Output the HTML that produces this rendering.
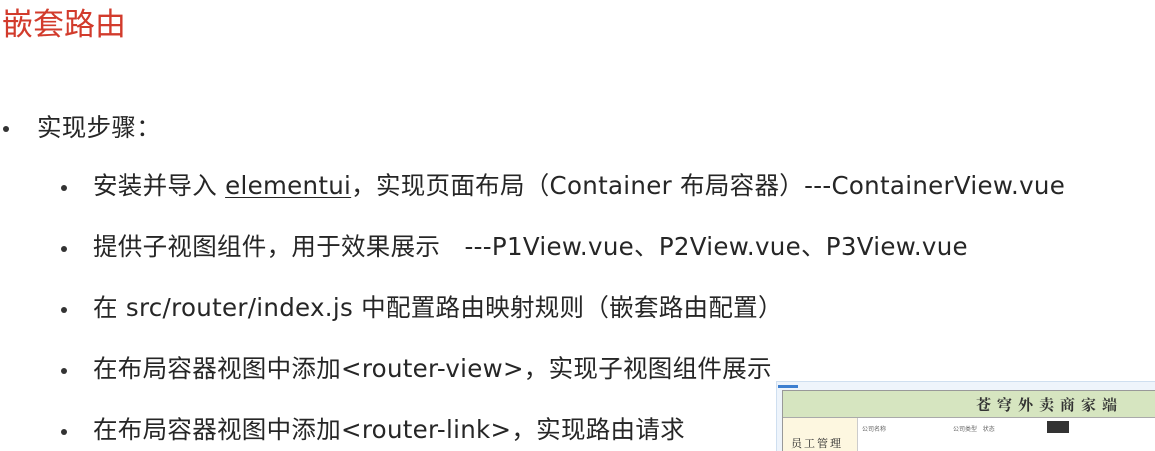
<!DOCTYPE html>
<html><head><meta charset="utf-8"><style>
html,body{margin:0;padding:0;width:1155px;height:451px;overflow:hidden;background:#fff;}
body{position:relative;font-family:"DejaVu Sans","Noto Sans CJK SC",sans-serif;color:#262626;}
.t{position:absolute;left:2px;top:2px;font-size:31px;color:#d23b2c;line-height:40px;font-family:"Noto Sans CJK SC",sans-serif;}
.l{position:absolute;font-size:24.5px;letter-spacing:0.3px;line-height:30px;white-space:nowrap;}
.b{position:absolute;width:6px;height:6px;border-radius:50%;background:#333;}
u{text-decoration-thickness:1px;text-underline-offset:3px;}
</style></head><body>
<div class="t">嵌套路由</div>
<div class="b" style="left:3px;top:126px"></div>
<div class="l" style="left:37px;top:113px">实现步骤：</div>
<div class="b" style="left:61px;top:185px"></div>
<div class="l" style="left:93px;top:171px">安装并导入 <u>elementui</u>，实现页面布局（Container 布局容器）---ContainerView.vue</div>
<div class="b" style="left:61px;top:246px"></div>
<div class="l" style="left:93px;top:232px">提供子视图组件，用于效果展示&nbsp;&nbsp;&nbsp;---P1View.vue、P2View.vue、P3View.vue</div>
<div class="b" style="left:61px;top:307px"></div>
<div class="l" style="left:93px;top:293px">在 src/router/index.js 中配置路由映射规则（嵌套路由配置）</div>
<div class="b" style="left:61px;top:368px"></div>
<div class="l" style="left:93px;top:354px">在布局容器视图中添加&lt;router-view&gt;，实现子视图组件展示</div>
<div class="b" style="left:61px;top:429px"></div>
<div class="l" style="left:93px;top:415px">在布局容器视图中添加&lt;router-link&gt;，实现路由请求</div>
<div style="position:absolute;left:776px;top:381px;width:379px;height:70px;background:#eef4fb;border-top:1px solid #cfdff0;border-left:1px solid #cfdff0;"></div>
<div style="position:absolute;left:778px;top:385px;width:20px;height:3px;background:#3d7fd0;"></div>
<div style="position:absolute;left:782px;top:390px;width:373px;height:61px;background:#fff;border-left:1px solid #999;border-top:1px solid #999;">
<div style="height:26px;background:#d6e5c0;border-bottom:1px solid #aaa;font-size:15px;line-height:27px;color:#333;font-family:'Noto Serif CJK SC',serif;padding-left:193px;letter-spacing:6px;font-weight:bold;">苍穹外卖商家端</div>
<div style="position:absolute;left:0;top:27px;width:74px;height:40px;background:#fdf7e0;border-right:1px solid #ccc;font-size:11px;font-family:'Noto Serif CJK SC',serif;"><span style="position:absolute;left:8px;top:17px;letter-spacing:2px">员工管理</span></div>
<div style="position:absolute;left:79px;top:33px;font-size:6px;color:#666;">公司名称</div>
<div style="position:absolute;left:170px;top:33px;font-size:6px;color:#666;">公司类型 &nbsp; 状态</div>
<div style="position:absolute;left:264px;top:30px;width:22px;height:12px;background:#333;"></div>
</div>
</body></html>
